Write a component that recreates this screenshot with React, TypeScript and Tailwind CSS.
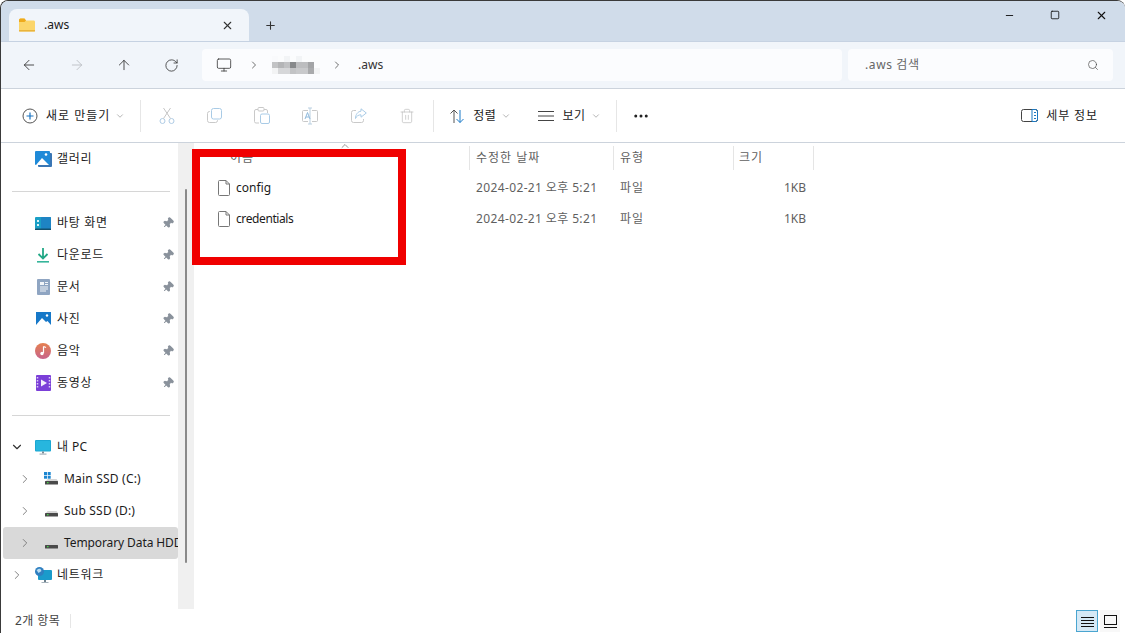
import { ReactNode } from "react";
import { X, Plus, ArrowLeft, ArrowRight, ArrowUp, RotateCw, Monitor, ChevronRight, ChevronDown, ChevronUp, Search, Trash2, Minus, Square, MoreHorizontal, Pin } from "lucide-react";

const FolderIcon = () => (
    <svg width="18" height="16" viewBox="0 0 18 16">
        <path d="M1 3a1.5 1.5 0 0 1 1.5-1.5h4L8 3.5h8A1.5 1.5 0 0 1 17 5v8.500a1 1 0 0 1-1 1H2a1 1 0 0 1-1-1z" fill="#fbd56a" />
        <path d="M1 3a1.500 1.500 0 0 1 1.500-1.500h4L8 3.500 6.500 5H1z" fill="#eeaa1c" />
        <rect x="1" y="13" width="16" height="1.500" fill="#e9b43c" />
    </svg>
);

const GalleryIcon = () => (
    <svg width="17" height="16" viewBox="0 0 17 16">
        <rect x="3" y="2" width="14" height="14" rx="1" fill="#3a76b4" />
        <rect x="0" y="0" width="15" height="14" rx="1" fill="#1f8ad8" />
        <path d="M1 14l6-7 7 7z" fill="#ffffff" />
        <circle cx="11" cy="3.500" r="1.300" fill="#ffffff" />
    </svg>
);

const DesktopIcon = () => (
    <svg width="16" height="13" viewBox="0 0 16 13">
        <rect width="16" height="12" rx="1" fill="#1a9fc6" />
        <rect x="6" width="10" height="12" rx="1" fill="#1e84c4" />
        <rect x="2" y="3" width="2" height="2" fill="#d8f2f8" />
        <rect x="2" y="7" width="2" height="2" fill="#d8f2f8" />
        <rect y="11.500" width="16" height="1.500" fill="#13506e" />
    </svg>
);

const DownloadIcon = () => (
    <svg width="14" height="15" viewBox="0 0 14 15" fill="none">
        <path d="M7 0v10M2.500 6L7 10.500 11.500 6" stroke="#22a886" strokeWidth="1.800" />
        <rect x="1" y="13" width="12" height="1.600" fill="#36b59a" />
    </svg>
);

const DocIcon = () => (
    <svg width="13" height="16" viewBox="0 0 13 16">
        <rect width="13" height="16" rx="1" fill="#8fa5c2" />
        <rect x="3" y="3" width="4" height="3" fill="#f2f5f9" />
        <path d="M8 3.500h3M8 5.500h3M3 8h8M3 10h8M3 12h6" stroke="#f2f5f9" strokeWidth="1" />
    </svg>
);

const PhotoIcon = () => (
    <svg width="15" height="14" viewBox="0 0 15 14">
        <rect width="15" height="14" fill="#1678c8" />
        <path d="M0 13l6-7 4 4 1.500-1 3.500 4v1H0z" fill="#ffffff" />
        <circle cx="11" cy="3.500" r="1.200" fill="#ffffff" />
    </svg>
);

const MusicIcon = () => (
    <svg width="16" height="16" viewBox="0 0 16 16">
        <defs>
            <linearGradient id="mus" x1="0" y1="0" x2="0" y2="1">
                <stop offset="0" stopColor="#e58050" />
                <stop offset="1" stopColor="#c8648c" />
            </linearGradient>
        </defs>
        <circle cx="8" cy="8" r="8" fill="url(#mus)" />
        <path d="M8.500 3.500v6.500" stroke="#fff" strokeWidth="1.200" />
        <path d="M8.500 3.500l2.500 1" stroke="#fff" strokeWidth="1.200" />
        <circle cx="7" cy="10.500" r="1.700" fill="#fff" />
    </svg>
);

const VideoIcon = () => (
    <svg width="15" height="16" viewBox="0 0 15 16">
        <rect width="15" height="16" rx="1" fill="#7b3fd8" />
        <path d="M5 4.500l6 3.500-6 3.500z" fill="#f4eefc" />
        <path d="M1.500 2v12M13.500 2v12" stroke="#dccbf6" strokeWidth="1.500" strokeDasharray="1.500 1.500" />
    </svg>
);

const PcIcon = () => (
    <svg width="16" height="15" viewBox="0 0 16 15">
        <rect width="16" height="11.500" rx="1" fill="#1ba7d2" />
        <rect x="1" y="1" width="14" height="9.500" fill="#27b6de" />
        <rect x="7" y="11.500" width="2" height="2" fill="#7b8b96" />
        <rect x="4.500" y="13.500" width="7" height="1.200" fill="#a6b3bc" />
    </svg>
);

const DriveIcon = ({ win }: { win?: boolean }) => (
    <svg width="15" height="14" viewBox="0 0 15 14">
        {win && (
            <g fill="#1c86d0">
                <rect x="0" y="0" width="3" height="3" />
                <rect x="3.700" y="0" width="3" height="3" />
                <rect x="0" y="3.700" width="3" height="3" />
                <rect x="3.700" y="3.700" width="3" height="3" />
            </g>
        )}
        <path d="M2 9l1.500-2h9L14 9z" fill="#d5d5d5" />
        <rect x="1" y="9" width="13" height="3.500" rx="0.500" fill="#4a4a4a" />
        <rect x="3" y="10" width="1.500" height="1.300" fill="#46d24a" />
    </svg>
);

const NetworkIcon = () => (
    <svg width="17" height="16" viewBox="0 0 17 16">
        <rect x="3" y="3" width="14" height="10" rx="1" fill="#1a9bcb" />
        <rect x="9" y="13" width="2" height="2" fill="#6c7f8c" />
        <rect x="6.500" y="15" width="7" height="1" fill="#a6b3bc" />
        <circle cx="4.500" cy="4.500" r="4.500" fill="#2f7fc0" />
        <path d="M1.500 3c2-1 3-1.500 4-1l1 2-3 2z" fill="#b8dcf2" />
    </svg>
);

const ScissorsIcon = () => (
    <svg width="16" height="18" viewBox="0 0 16 18" fill="none" stroke="#aecbe4" strokeWidth="1">
        <circle cx="3.500" cy="14" r="2.500" />
        <circle cx="12.500" cy="14" r="2.500" />
        <path d="M4.500 11.500L11.500 1M11.500 11.500L4.500 1" stroke="#c6c6c6" />
    </svg>
);

const CopyIcon = () => (
    <svg width="15" height="15" viewBox="0 0 15 15" fill="none">
        <rect x="4.500" y="0.500" width="10" height="10.500" rx="2" stroke="#a9cbe6" />
        <path d="M3 3.500h-0.500a2 2 0 0 0-2 2v7a2 2 0 0 0 2 2h6a2 2 0 0 0 2-2V12" stroke="#c9c9c9" />
    </svg>
);

const PasteIcon = () => (
    <svg width="16" height="17" viewBox="0 0 16 17" fill="none">
        <path d="M4 2.500H2a1.500 1.500 0 0 0-1.500 1.500v10.500A1.500 1.500 0 0 0 2 16h3M10 2.500h2A1.500 1.500 0 0 1 13.500 4v2" stroke="#c9c9c9" />
        <rect x="4" y="0.500" width="6" height="3.500" rx="1" stroke="#c9c9c9" />
        <rect x="6.500" y="7" width="9" height="9.500" rx="1.500" stroke="#a9cbe6" />
    </svg>
);

const RenameIcon = () => (
    <svg width="18" height="18" viewBox="0 0 18 18" fill="none" stroke="#b6cfe4" strokeWidth="1">
        <path d="M7 3.500H2.500a1 1 0 0 0-1 1v9a1 1 0 0 0 1 1H7M11 3.500h4.500a1 1 0 0 1 1 1v9a1 1 0 0 1-1 1H11" stroke="#c9c9c9" />
        <path d="M9 1v16M7 1h4M7 17h4" stroke="#b9cfe0" />
        <path d="M4 12l2.500-6.500L9 12M5 10h3" stroke="#8eb9dc" />
    </svg>
);

const ShareIcon = () => (
    <svg width="16" height="15" viewBox="0 0 16 15" fill="none">
        <path d="M5 2.500H2.500a2 2 0 0 0-2 2v8a2 2 0 0 0 2 2h8a2 2 0 0 0 2-2V11" stroke="#c9c9c9" />
        <path d="M10 0.800L15.300 5 10 9.200V6.800C7.500 6.800 5.500 8 4.500 10.500 4.500 6.500 6.800 3.500 10 3.200z" stroke="#a9cbe6" strokeLinejoin="round" />
    </svg>
);

const NewIcon = () => (
    <svg width="16" height="16" viewBox="0 0 16 16" fill="none">
        <circle cx="8" cy="8" r="7" stroke="#555" strokeWidth="1" />
        <path d="M8 4.500v7M4.500 8h7" stroke="#1a74c2" strokeWidth="1.200" />
    </svg>
);

const SortIcon = () => (
    <svg width="16" height="16" viewBox="0 0 16 16" fill="none">
        <path d="M5 15V2M1.500 5.500L5 2l3.500 3.500" stroke="#555" strokeWidth="1" />
        <path d="M11 2v12.500M7.500 11l3.500 3.500 3.500-3.500" stroke="#1a7ac8" strokeWidth="1" />
    </svg>
);

const DetailsIcon = () => (
    <svg width="17" height="13" viewBox="0 0 17 13" fill="none">
        <rect x="0.500" y="0.500" width="16" height="12" rx="2" stroke="#444" />
        <path d="M11 0.500h3.500a2 2 0 0 1 2 2v8a2 2 0 0 1-2 2H11z" stroke="#1a78c2" />
        <path d="M13 3.500h2M13 6.500h2M13 9.500h2" stroke="#1a78c2" />
    </svg>
);

const FileIcon = () => (
    <svg width="13" height="16" viewBox="0 0 13 16" fill="#fff" stroke="#777" strokeWidth="1">
        <path d="M1.500 0.500h6.500l3.500 3.500v10.500a1 1 0 0 1-1 1h-9a1 1 0 0 1-1-1v-13a1 1 0 0 1 1-1z" />
        <path d="M8 0.500v3.500h3.500" fill="none" />
    </svg>
);

function Caret() {
    return <ChevronDown className="ml-[5px] text-[#8a8a8a]" size={10} strokeWidth={1.5} />;
}

function NavRow({ icon, label, labelClass, pinned, chevron, indent, selected }: { icon: ReactNode; label: string; labelClass: string; pinned?: boolean; chevron?: "right" | "down"; indent?: boolean; selected?: boolean }) {
    return (
        <div className={`relative flex h-8 shrink-0 items-center overflow-hidden whitespace-nowrap rounded-[3px] ${selected ? "ml-[2px] bg-[#d9d9d9]" : ""}`}>
            <div className={`flex shrink-0 justify-center ${selected ? "ml-[13px] w-[18px]" : indent ? "ml-[15px] w-[18px]" : "ml-[7px] w-[18px]"}`}>
                {chevron === "right" && <ChevronRight size={14} className="text-[#7a7a7a]" strokeWidth={1.6} />}
                {chevron === "down" && <ChevronDown size={14} className="text-[#333]" strokeWidth={2} />}
            </div>
            <div className={`flex shrink-0 items-center justify-center ${indent ? "ml-[10px] w-[15px]" : "ml-[8px] w-[18px]"}`}>{icon}</div>
            <span className={`ml-[5px] text-[12px] text-[#1b1b1b] ${labelClass}`}>{label}</span>
            {pinned && <Pin size={12} fill="#8a929c" className="absolute right-[4px] top-[10px] rotate-45 text-[#8a929c]" />}
        </div>
    );
}

function Divider({ className }: { className: string }) {
    return <div className={`ml-[11px] w-[158px] shrink-0 border-t border-[#d6d6d6] ${className}`} />;
}

function FileRow({ name, nameClass }: { name: string; nameClass: string }) {
    return (
        <div className="flex h-[31px] items-center text-[12px] text-[#1b1b1b]">
            <div className="flex w-[274px] items-center pl-[22px]">
                <FileIcon />
                <span className={`ml-[5px] ${nameClass}`}>{name}</span>
            </div>
            <div className="w-[144px] pl-[6px] tracking-[0.37px] text-[#5f5f5f]">2024-02-21 오후 5:21</div>
            <div className="w-[120px] pl-[6px] tracking-[1px] text-[#5f5f5f]">파일</div>
            <div className="w-[72px] text-right text-[#5f5f5f]">1KB</div>
        </div>
    );
}

function Mosaic() {
    const rows = [
        ["#f9fafc", "#fbfcfd", "#f2f4f6", "#fbfcfd", "#f2f4f6", "#fbfcfd", "#fbfcfd", "#fbfcfd"],
        ["#c2c3c5", "#b4b5b7", "#c0c1c3", "#87898b", "#bcbdbf", "#bcbdbf", "#a3a4a6", "#fbfcfd"],
        ["#f2f3f4", "#d6d7d9", "#d6d7d9", "#c2c3c5", "#c8c9cb", "#c8c9cb", "#a9aaac", "#f2f3f4"],
    ];
    return (
        <div className="flex flex-col">
            {rows.map((r, i) => (
                <div key={i} className="flex">
                    {r.map((c, j) => (
                        <div key={j} className="h-[6px] w-[6px]" style={{ backgroundColor: c }} />
                    ))}
                </div>
            ))}
        </div>
    );
}

export default function App() {
    return (
        <div className="relative flex h-[633px] w-[1125px] flex-col overflow-hidden rounded-t-[8px] border-l border-t border-[#3a3a3a] bg-white font-['Noto_Sans','Noto_Sans_CJK_KR',sans-serif]">
            {/* Tab strip */}
            <div className="flex h-[40px] shrink-0 items-end bg-[#d0dcea] pl-[8px]">
                <div className="flex h-[32px] w-[240px] items-center rounded-t-[8px] bg-[#f1f5fa] pl-[9px] pr-[15px]">
                    <FolderIcon />
                    <span className="ml-[8px] text-[12px] text-[#1b1b1b]">.aws</span>
                    <X size={13} className="ml-auto text-[#333]" />
                </div>
                <div className="ml-[15px] flex h-[32px] items-center">
                    <Plus size={13} className="text-[#333]" />
                </div>
                <div className="ml-auto flex h-[40px] items-start pr-[1px] pt-[8px]">
                    <div className="flex w-[45px] justify-center pt-[1px]"><Minus size={11} className="text-[#111]" /></div>
                    <div className="flex w-[46px] justify-center pt-[1px]"><Square size={10} className="text-[#111]" /></div>
                    <div className="flex w-[46px] justify-center"><X size={13} className="text-[#111]" /></div>
                </div>
            </div>

            {/* Address row */}
            <div className="flex h-[48px] shrink-0 items-center border-b border-t border-[#ccd3dc] border-t-[#c6d2e2] bg-[#f1f5fa]">
                <div className="flex w-[201px] items-center pl-[20px] text-[#333]">
                    <ArrowLeft size={16} strokeWidth={1.3} />
                    <ArrowRight size={16} strokeWidth={1.3} className="ml-[32px] text-[#b8bcc0]" />
                    <ArrowUp size={16} strokeWidth={1.3} className="ml-[31px]" />
                    <RotateCw size={15} strokeWidth={1.3} className="ml-[32px]" />
                </div>
                <div className="flex h-[32px] w-[640px] items-center rounded-[4px] bg-[#fbfcfe] pl-[14px] text-[#333]">
                    <Monitor size={16} strokeWidth={1.2} />
                    <ChevronRight size={12} strokeWidth={1.4} className="ml-[16px]" />
                    <div className="ml-[12px]"><Mosaic /></div>
                    <ChevronRight size={12} strokeWidth={1.4} className="ml-[11px]" />
                    <span className="ml-[15px] text-[12px] text-[#333]">.aws</span>
                </div>
                <div className="ml-[6px] flex h-[32px] w-[265px] items-center rounded-[4px] bg-[#fbfcfe] pl-[17px] pr-[14px] text-[12px] tracking-[0.6px] text-[#666]">
                    <span>.aws 검색</span>
                    <Search size={12} strokeWidth={1.3} className="ml-auto text-[#444]" />
                </div>
            </div>

            {/* Command bar */}
            <div className="flex h-[54px] shrink-0 items-center border-b border-[#ccd3dc] bg-white text-[12px] text-[#1b1b1b]">
                <div className="ml-[21px] flex items-center">
                    <NewIcon />
                    <span className="ml-[8px] tracking-[1px]">새로 만들기</span>
                    <Caret />
                </div>
                <div className="ml-[15px] h-[32px] w-px bg-[#e6e6e6]" />
                <div className="ml-[18px]"><ScissorsIcon /></div>
                <div className="ml-[32px]"><CopyIcon /></div>
                <div className="ml-[32px]"><PasteIcon /></div>
                <div className="ml-[31px]"><RenameIcon /></div>
                <div className="ml-[32px]"><ShareIcon /></div>
                <Trash2 size={16} strokeWidth={1} className="ml-[32px] text-[#b9b9b9]" />
                <div className="ml-[18px] h-[32px] w-px bg-[#e6e6e6]" />
                <div className="ml-[15px]"><SortIcon /></div>
                <span className="ml-[8px] tracking-[0.5px]">정렬</span>
                <Caret />
                <svg width="16" height="12" viewBox="0 0 16 12" className="ml-[27px]" stroke="#444" strokeWidth="1">
                    <path d="M0 1.500h16M0 6h16M0 10.500h16" />
                </svg>
                <span className="ml-[8px] tracking-[0.5px]">보기</span>
                <Caret />
                <div className="ml-[15px] h-[32px] w-px bg-[#e6e6e6]" />
                <MoreHorizontal size={18} className="ml-[15px] text-[#222]" strokeWidth={2} />
                <div className="ml-auto mr-[27px] flex items-center">
                    <DetailsIcon />
                    <span className="ml-[8px] tracking-[0.9px]">세부 정보</span>
                </div>
            </div>

            {/* Body */}
            <div className="flex min-h-0 flex-1">
                <div className="flex w-[177px] shrink-0 flex-col overflow-hidden">
                    <NavRow icon={<GalleryIcon />} label="갤러리" labelClass="tracking-[0.7px]" />
                    <Divider className="mb-[15px] mt-[16px]" />
                    <NavRow icon={<DesktopIcon />} label="바탕 화면" labelClass="tracking-[0.7px]" pinned />
                    <NavRow icon={<DownloadIcon />} label="다운로드" labelClass="tracking-[0.7px]" pinned />
                    <NavRow icon={<DocIcon />} label="문서" labelClass="tracking-[0.7px]" pinned />
                    <NavRow icon={<PhotoIcon />} label="사진" labelClass="tracking-[0.7px]" pinned />
                    <NavRow icon={<MusicIcon />} label="음악" labelClass="tracking-[0.7px]" pinned />
                    <NavRow icon={<VideoIcon />} label="동영상" labelClass="tracking-[0.7px]" pinned />
                    <Divider className="mb-[15px] mt-[16px]" />
                    <NavRow icon={<PcIcon />} label="내 PC" labelClass="tracking-[0.4px]" chevron="down" />
                    <NavRow icon={<DriveIcon win />} label="Main SSD (C:)" labelClass="tracking-[0.2px]" chevron="right" indent />
                    <NavRow icon={<DriveIcon />} label="Sub SSD (D:)" labelClass="tracking-[0.2px]" chevron="right" indent />
                    <NavRow icon={<DriveIcon />} label="Temporary Data HDD" labelClass="tracking-[-0.1px]" chevron="right" indent selected />
                    <NavRow icon={<NetworkIcon />} label="네트워크" labelClass="tracking-[0.7px]" chevron="right" />
                </div>

                {/* Sidebar scrollbar */}
                <div className="w-[16px] shrink-0 bg-[#f0f0f0] pl-[7px] pt-[46px]">
                    <div className="h-[374px] w-[2px] rounded-full bg-[#8a8a8a]" />
                </div>

                {/* File list */}
                <div className="relative min-w-0 flex-1 pl-[2px]">
                    <div className="flex h-[29px] items-center text-[12px] tracking-[1px] text-[#5f5f5f]">
                        <div className="flex h-[24px] w-[274px] items-center border-r border-[#e5e5e5] pl-[34px]">이름</div>
                        <div className="flex h-[24px] w-[144px] items-center border-r border-[#e5e5e5] pl-[6px]">수정한 날짜</div>
                        <div className="flex h-[24px] w-[120px] items-center border-r border-[#e5e5e5] pl-[6px]">유형</div>
                        <div className="flex h-[24px] w-[80px] items-center border-r border-[#e5e5e5] pl-[5px]">크기</div>
                    </div>
                    <FileRow name="config" nameClass="tracking-normal" />
                    <FileRow name="credentials" nameClass="tracking-[-0.4px]" />
                    <ChevronUp size={12} strokeWidth={1.2} className="absolute left-[145px] top-[-3px] text-[#555]" />
                    {/* Red annotation box */}
                    <div className="absolute left-[-2px] top-[6px] h-[116px] w-[214px] border-[8px] border-[#f00000]" />
                </div>
            </div>

            {/* Status bar */}
            <div className="flex h-[24px] shrink-0 items-center bg-white pl-[14px] pr-[5px] text-[12px] tracking-[0.4px] text-[#444]">
                <span>2개 항목</span>
                <div className="ml-[10px] h-[14px] w-px bg-[#e6e6e6]" />
                <div className="ml-auto flex items-center gap-[2px]">
                    <div className="flex h-[22px] w-[22px] items-center justify-center border border-[#4aa5d0] bg-[#d5e9f6]">
                        <svg width="13" height="11" viewBox="0 0 13 11" stroke="#111" strokeWidth="1">
                            <path d="M0 1.500h13M0 4.500h13M0 7.500h13M0 10.500h13" />
                        </svg>
                    </div>
                    <div className="flex h-[22px] w-[20px] items-center justify-center bg-[#f8f8f8]">
                        <svg width="13" height="13" viewBox="0 0 13 13" fill="none" stroke="#111" strokeWidth="1">
                            <rect x="0.500" y="0.500" width="12" height="9" />
                            <path d="M0 12.500h13" />
                        </svg>
                    </div>
                </div>
            </div>
        </div>
    );
}
